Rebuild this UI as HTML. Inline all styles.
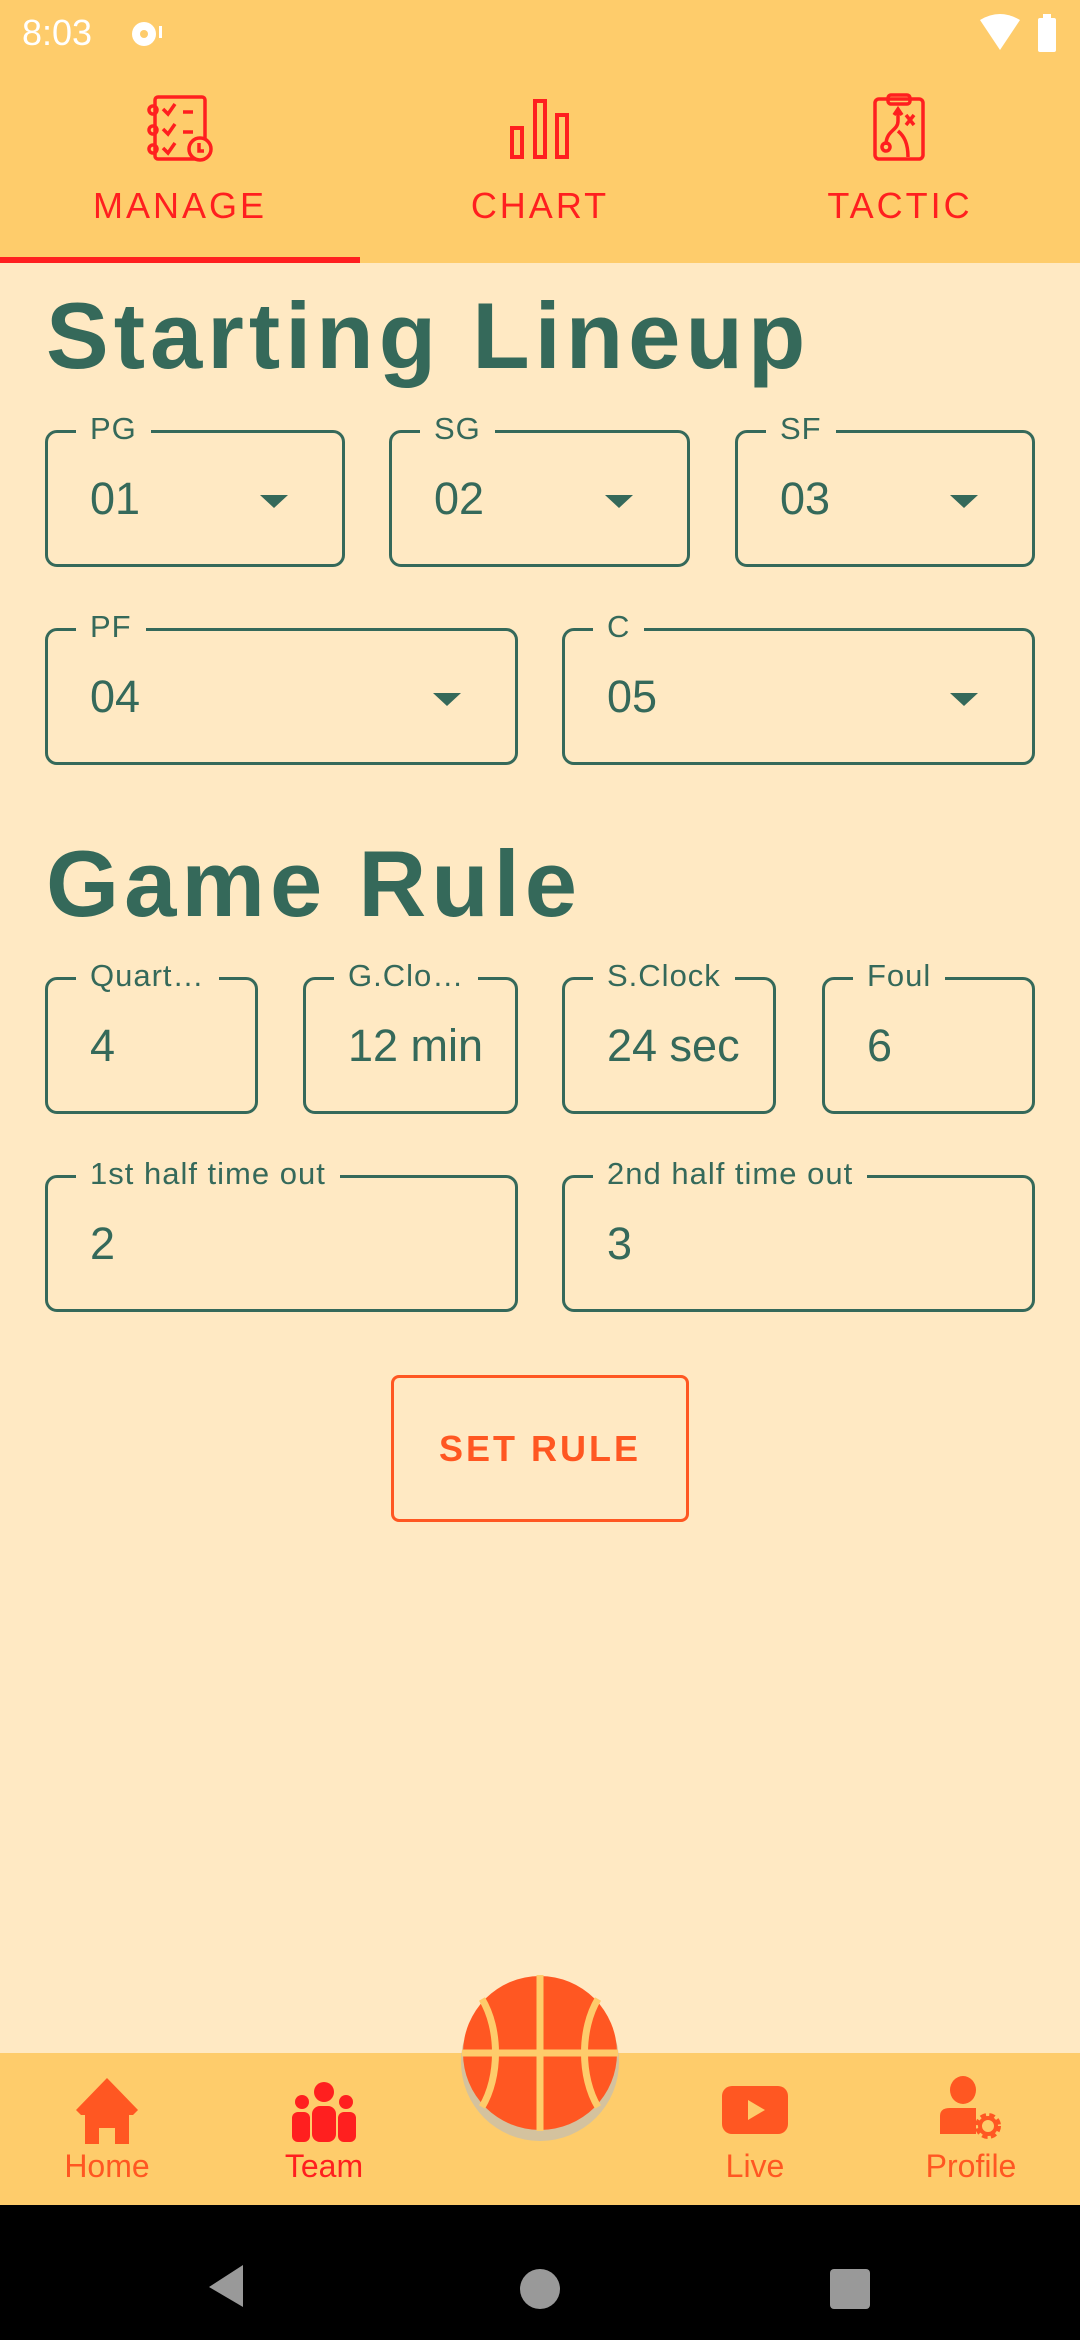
<!DOCTYPE html>
<html><head><meta charset="utf-8"><style>
*{margin:0;padding:0;box-sizing:border-box}
body{width:1080px;height:2340px;background:#FFE9C3;position:relative;overflow:hidden;font-family:"Liberation Sans",sans-serif;color:#35695A}
.status{position:absolute;left:0;top:0;width:1080px;height:263px;background:#FECC6B}
.time{position:absolute;left:22px;top:12px;font-size:36px;color:#fff}
.tab{position:absolute;top:185px;width:360px;text-align:center;font-size:36px;letter-spacing:3px;color:#FF1F1F}
.ind{position:absolute;left:0;top:257px;width:360px;height:6px;background:#FF1F1F}
h1{position:absolute;left:46px;font-size:94px;font-weight:bold;color:#35695A;letter-spacing:5px}
.f{position:absolute;border:3px solid #35695A;border-radius:12px;height:137px}
.f .l{position:absolute;top:-22px;left:28px;padding:0 14px;background:#FFE9C3;font-size:31px;letter-spacing:1px;white-space:nowrap}
.f .v{position:absolute;left:42px;top:40px;font-size:45px}
.f .t{position:absolute;right:54px;top:62px;width:0;height:0;border-left:14px solid transparent;border-right:14px solid transparent;border-top:13px solid #35695A}
.btn{position:absolute;left:391px;top:1375px;width:298px;height:147px;border:3px solid #FF5722;border-radius:8px;color:#FF5722;font-size:36px;letter-spacing:3px;text-align:center;line-height:141px;font-weight:bold}
.nav{position:absolute;left:0;top:2053px;width:1080px;height:152px;background:#FECC6B}
.sys{position:absolute;left:0;top:2205px;width:1080px;height:135px;background:#000}
.nl{position:absolute;top:2148px;width:200px;text-align:center;font-size:32px;color:#FF5722}
</style></head><body>
<div class="status">
<div class="time">8:03</div>
<svg style="position:absolute;left:128px;top:18px" width="36" height="32"><circle cx="16" cy="16" r="12" fill="#fff"/><circle cx="16" cy="16" r="4" fill="#FECC6B"/><rect x="31" y="8" width="3" height="12" fill="#fff"/></svg>
<svg style="position:absolute;left:978px;top:14px" width="44" height="38"><path d="M2 6 Q22 -6 42 6 L22 36 Z" fill="#fff"/></svg>
<svg style="position:absolute;left:1036px;top:14px" width="24" height="40"><rect x="2" y="4" width="18" height="34" rx="2" fill="#fff"/><rect x="7" y="0" width="8" height="5" fill="#fff"/></svg>
<svg style="position:absolute;left:145px;top:93px" width="70" height="70" fill="none" stroke="#FF1F1F" stroke-width="3.5"><rect x="10" y="4" width="50" height="62" rx="3"/><circle cx="8" cy="17" r="4"/><circle cx="8" cy="37" r="4"/><circle cx="8" cy="56" r="4"/><path d="M18 16l5 5 7-10M18 36l5 5 7-10M18 55l5 5 7-10M38 19h10M38 39h10"/><circle cx="55" cy="56" r="11" fill="#FECC6B"/><path d="M54 50v8h5"/></svg>
<svg style="position:absolute;left:508px;top:98px" width="64" height="62" fill="none" stroke="#FF1F1F" stroke-width="4"><rect x="4" y="30" width="10" height="29"/><rect x="27" y="3" width="10" height="56"/><rect x="49" y="17" width="10" height="42"/></svg>
<svg style="position:absolute;left:872px;top:93px" width="56" height="70" fill="none" stroke="#FF1F1F" stroke-width="3.5"><rect x="3" y="6" width="48" height="60" rx="4"/><rect x="16" y="2" width="22" height="9" rx="3"/><path d="M14 52c0-15 12-14 12-24v-10M22 22l4-6 4 6M34 22l8 10M42 22l-8 10M26 38c6 5 10 12 10 26"/><circle cx="14" cy="54" r="4"/></svg>
<div class="tab" style="left:0">MANAGE</div>
<div class="tab" style="left:360px">CHART</div>
<div class="tab" style="left:720px">TACTIC</div>
<div class="ind"></div>
</div>

<h1 style="top:282px">Starting Lineup</h1>
<div class="f" style="left:45px;top:430px;width:300px"><span class="l">PG</span><span class="v">01</span><span class="t"></span></div>
<div class="f" style="left:389px;top:430px;width:301px"><span class="l">SG</span><span class="v">02</span><span class="t"></span></div>
<div class="f" style="left:735px;top:430px;width:300px"><span class="l">SF</span><span class="v">03</span><span class="t"></span></div>
<div class="f" style="left:45px;top:628px;width:473px"><span class="l">PF</span><span class="v">04</span><span class="t"></span></div>
<div class="f" style="left:562px;top:628px;width:473px"><span class="l">C</span><span class="v">05</span><span class="t"></span></div>

<h1 style="top:830px">Game Rule</h1>
<div class="f" style="left:45px;top:977px;width:213px"><span class="l">Quart…</span><span class="v">4</span></div>
<div class="f" style="left:303px;top:977px;width:215px"><span class="l">G.Clo…</span><span class="v">12 min</span></div>
<div class="f" style="left:562px;top:977px;width:214px"><span class="l">S.Clock</span><span class="v">24 sec</span></div>
<div class="f" style="left:822px;top:977px;width:213px"><span class="l">Foul</span><span class="v">6</span></div>
<div class="f" style="left:45px;top:1175px;width:473px"><span class="l">1st half time out</span><span class="v">2</span></div>
<div class="f" style="left:562px;top:1175px;width:473px"><span class="l">2nd half time out</span><span class="v">3</span></div>
<div class="btn">SET RULE</div>

<div class="nav"></div>
<svg style="position:absolute;left:420px;top:2040px" width="240" height="130"><path d="M0 13 Q40 13 50 30 Q68 105 120 105 Q172 105 190 30 Q200 13 240 13 Z" fill="#FECC6B"/><circle cx="120" cy="22" r="79" fill="#D4C29E"/></svg>
<svg style="position:absolute;left:462px;top:1975px" width="156" height="156"><circle cx="78" cy="78" r="77" fill="#FF5722"/><path d="M78 0v156M0 78h156M20 24c18 30 18 78 0 108M136 24c-18 30-18 78 0 108" stroke="#FECC6B" stroke-width="7" fill="none"/></svg>
<svg style="position:absolute;left:74px;top:2076px" width="66" height="70" fill="#FF5722"><path d="M33 2L2 34l5 5h4v29h14V52h16v16h14V39h4l5-5z"/></svg>
<svg style="position:absolute;left:290px;top:2080px" width="68" height="62" fill="#FF1F1F"><circle cx="34" cy="12" r="10"/><circle cx="12" cy="22" r="7"/><circle cx="56" cy="22" r="7"/><rect x="22" y="26" width="24" height="36" rx="8"/><rect x="2" y="32" width="18" height="30" rx="6"/><rect x="48" y="32" width="18" height="30" rx="6"/></svg>
<svg style="position:absolute;left:722px;top:2086px" width="66" height="48"><rect width="66" height="48" rx="10" fill="#FF5722"/><path d="M26 14l17 10-17 10z" fill="#FECC6B"/></svg>
<svg style="position:absolute;left:938px;top:2076px" width="66" height="70" fill="#FF5722"><ellipse cx="25" cy="14" rx="13" ry="14"/><path d="M2 40q0-8 10-8h26v26H2z"/><circle cx="50" cy="50" r="10" fill="none" stroke="#FF5722" stroke-width="6" stroke-dasharray="5 3"/><circle cx="50" cy="50" r="8" fill="none" stroke="#FF5722" stroke-width="4"/></svg>
<div class="nl" style="left:7px">Home</div>
<div class="nl" style="left:224px;color:#FF1F1F">Team</div>
<div class="nl" style="left:655px">Live</div>
<div class="nl" style="left:871px">Profile</div>

<div class="sys">
<svg style="position:absolute;left:205px;top:58px" width="40" height="46"><path d="M38 2v42L4 24z" fill="#999"/></svg>
<div style="position:absolute;left:520px;top:64px;width:40px;height:40px;border-radius:50%;background:#999"></div>
<div style="position:absolute;left:830px;top:64px;width:40px;height:40px;border-radius:4px;background:#999"></div>
</div>
</body></html>
